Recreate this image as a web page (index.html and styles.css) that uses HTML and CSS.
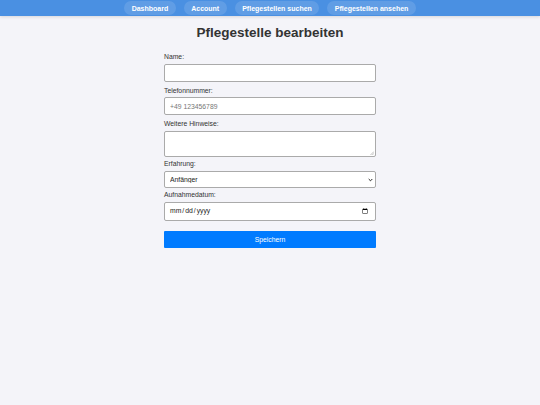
FILE: index.html
```html
<!DOCTYPE html>
<html lang="de">
<head>
<meta charset="utf-8">
<title>Pflegestelle bearbeiten</title>
<link rel="stylesheet" href="styles.css">
</head>
<body>
<nav class="topnav">
  <a class="pill" href="#">Dashboard</a>
  <a class="pill" href="#">Account</a>
  <a class="pill" href="#">Pflegestellen suchen</a>
  <a class="pill" href="#">Pflegestellen ansehen</a>
</nav>
<main class="page">
  <h1 class="title">Pflegestelle bearbeiten</h1>
  <form class="form">
    <label class="label" for="name">Name:</label>
    <input class="field field-text" id="name" type="text">
    <label class="label" for="tel">Telefonnummer:</label>
    <input class="field field-text" id="tel" type="tel" placeholder="+49 123456789">
    <label class="label" for="notes">Weitere Hinweise:</label>
    <div class="wrap wrap-area">
      <textarea class="field field-area" id="notes"></textarea>
      <svg class="grip" width="4" height="4" viewBox="0 0 4 4"><path d="M0.5 4 L4 0.5 M2.3 4 L4 2.3" stroke="#999" stroke-width="0.6"/></svg>
    </div>
    <label class="label" for="exp">Erfahrung:</label>
    <div class="wrap wrap-select">
      <select class="field field-select" id="exp">
        <option>Anfänger</option>
        <option>Fortgeschritten</option>
        <option>Experte</option>
      </select>
      <svg class="chev" width="5" height="4" viewBox="0 0 5 4"><path d="M0.7 1 L2.5 2.8 L4.3 1" fill="none" stroke="#222" stroke-width="1"/></svg>
    </div>
    <label class="label" for="date">Aufnahmedatum:</label>
    <input class="field field-date" id="date" type="date">
    <button class="save" type="button">Speichern</button>
  </form>
</main>
</body>
</html>
```
FILE: styles.css
```css
* { box-sizing: border-box; }
html, body { margin: 0; padding: 0; }
body {
  background: #f4f4f9;
  font-family: "Liberation Sans", Arial, sans-serif;
  color: #333;
  min-height: 405px;
}
.topnav {
  height: 16px;
  background: #4a90e2;
  display: flex;
  justify-content: center;
  align-items: center;
  gap: 8px;
  box-shadow: 0 1px 3px rgba(0,0,0,0.12);
}
.pill {
  display: flex;
  align-items: center;
  height: 14px;
  padding: 0 7.5px;
  border-radius: 7px;
  background: rgba(255,255,255,0.12);
  color: #fff;
  font-size: 7px;
  font-weight: bold;
  text-decoration: none;
}
.page {
  width: 212px;
  margin: 0 auto;
}
.title {
  margin: 0;
  padding-top: 9px;
  height: 37px;
  font-size: 13.5px;
  line-height: 15px;
  font-weight: bold;
  text-align: center;
  color: #333;
}
.form {
  display: flex;
  flex-direction: column;
}
.label {
  display: block;
  font-size: 6.8px;
  line-height: 8px;
  height: 8px;
  margin-bottom: 2.5px;
  color: #333;
}
.field {
  width: 100%;
  margin: 0;
  border: 1px solid #aaa;
  border-radius: 2px;
  background: #fff;
  font-family: "Liberation Sans", Arial, sans-serif;
  font-size: 6.8px;
  color: #222;
  padding: 0 5px;
}
.field::placeholder { color: #777; }
.field-text { height: 18px; margin-bottom: 5px; }
.wrap { position: relative; }
.wrap-area { margin-bottom: 3px; }
.field-area { height: 26px; resize: none; display: block; padding: 3px 5px; }
.grip { position: absolute; right: 2px; bottom: 2px; }
.wrap-select { margin-top: 1px; margin-bottom: 3px; }
.field-select {
  display: block;
  height: 17px;
  padding: 0 5px;
  -webkit-appearance: none;
  appearance: none;
}
.chev { position: absolute; right: 3px; top: 7px; pointer-events: none; }
.field-date { height: 19px; margin-bottom: 10px; padding: 0 4px; }
.save {
  height: 17px;
  width: 100%;
  border: none;
  border-radius: 1px;
  background: #007bff;
  color: #fff;
  font-family: "Liberation Sans", Arial, sans-serif;
  font-size: 6.8px;
  padding: 0;
}
```
